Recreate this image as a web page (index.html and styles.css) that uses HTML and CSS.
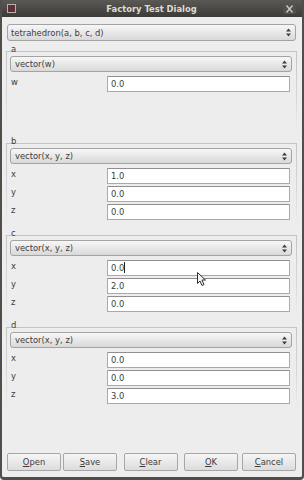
FILE: index.html
```html
<!DOCTYPE html>
<html lang="en">
<head>
  <meta charset="UTF-8">
  <title>Factory Test Dialog</title>
  <link rel="stylesheet" href="styles.css">
</head>
<body>
  <div class="window">
    <div class="titlebar">
      <span class="app-icon"></span>
      <span class="title">Factory Test Dialog</span>
      <span class="close">
        <svg width="13" height="10" viewBox="0 0 13 10"><path d="M3.5 1.5 L9.5 8.5 M9.5 1.5 L3.5 8.5" stroke="#d2cec6" stroke-width="1.3" fill="none"/></svg>
      </span>
    </div>

    <div class="content">
      <div class="combo combo-top">
        <span class="combo-text">tetrahedron(a, b, c, d)</span>
        <svg class="spin" width="5" height="9" viewBox="0 0 5 9"><path d="M0 3.5 L2.5 0.5 L5 3.5 Z M0 5.5 L5 5.5 L2.5 8.5 Z" fill="#3f3f3f"/></svg>
      </div>

      <!-- one group per tetrahedron vertex -->
      <section class="group">
        <div class="group-title">a</div>
        <div class="group-box">
          <div class="combo">
            <span class="combo-text">vector(w)</span>
            <svg class="spin" width="5" height="9" viewBox="0 0 5 9"><path d="M0 3.5 L2.5 0.5 L5 3.5 Z M0 5.5 L5 5.5 L2.5 8.5 Z" fill="#3f3f3f"/></svg>
          </div>
          <div class="rows">
            <div class="row"><span class="row-label">w</span><div class="field">0.0</div></div>
          </div>
        </div>
      </section>

      <section class="group">
        <div class="group-title">b</div>
        <div class="group-box">
          <div class="combo">
            <span class="combo-text">vector(x, y, z)</span>
            <svg class="spin" width="5" height="9" viewBox="0 0 5 9"><path d="M0 3.5 L2.5 0.5 L5 3.5 Z M0 5.5 L5 5.5 L2.5 8.5 Z" fill="#3f3f3f"/></svg>
          </div>
          <div class="rows">
            <div class="row"><span class="row-label">x</span><div class="field">1.0</div></div>
            <div class="row"><span class="row-label">y</span><div class="field">0.0</div></div>
            <div class="row"><span class="row-label">z</span><div class="field">0.0</div></div>
          </div>
        </div>
      </section>

      <section class="group">
        <div class="group-title">c</div>
        <div class="group-box">
          <div class="combo">
            <span class="combo-text">vector(x, y, z)</span>
            <svg class="spin" width="5" height="9" viewBox="0 0 5 9"><path d="M0 3.5 L2.5 0.5 L5 3.5 Z M0 5.5 L5 5.5 L2.5 8.5 Z" fill="#3f3f3f"/></svg>
          </div>
          <div class="rows">
            <div class="row"><span class="row-label">x</span><div class="field">0.0<span class="caret"></span></div></div>
            <div class="row"><span class="row-label">y</span><div class="field">2.0</div></div>
            <div class="row"><span class="row-label">z</span><div class="field">0.0</div></div>
          </div>
        </div>
      </section>

      <section class="group">
        <div class="group-title">d</div>
        <div class="group-box">
          <div class="combo">
            <span class="combo-text">vector(x, y, z)</span>
            <svg class="spin" width="5" height="9" viewBox="0 0 5 9"><path d="M0 3.5 L2.5 0.5 L5 3.5 Z M0 5.5 L5 5.5 L2.5 8.5 Z" fill="#3f3f3f"/></svg>
          </div>
          <div class="rows">
            <div class="row"><span class="row-label">x</span><div class="field">0.0</div></div>
            <div class="row"><span class="row-label">y</span><div class="field">0.0</div></div>
            <div class="row"><span class="row-label">z</span><div class="field">3.0</div></div>
          </div>
        </div>
      </section>

      <div class="buttons">
        <div class="btn-group">
          <button class="btn"><u>O</u>pen</button>
          <button class="btn"><u>S</u>ave</button>
        </div>
        <button class="btn"><u>C</u>lear</button>
        <div class="btn-group btn-group-wide">
          <button class="btn"><u>O</u>K</button>
          <button class="btn"><u>C</u>ancel</button>
        </div>
      </div>
    </div>

    <!-- mouse pointer from the screenshot -->
    <svg class="pointer" width="10" height="15" viewBox="0 0 10 15"><path d="M0.5 0.5 L0.5 11.5 L3 9 L5 13.5 L7 12.5 L5 8 L8.5 8 Z" fill="#f2f2f2" stroke="#2e2e2e" stroke-width="1" stroke-linejoin="round"/></svg>
  </div>
</body>
</html>
```

FILE: styles.css
```css
:root {
  --bg: #ededed;
  --text: #3c3c3c;
  --frame: #c4c4c4;
}
body {
  margin: 0;
  font-family: 'DejaVu Sans', sans-serif;
  font-size: 8.4px;
  color: var(--text);
  background: #fff;
}
.window {
  position: relative;
  width: 304px;
  height: 480px;
  box-sizing: border-box;
  display: flex;
  flex-direction: column;
  background: var(--bg);
  border: solid #4f4e4a;
  border-width: 0 2px 3px;
  border-radius: 0 0 4px 4px;
}
.titlebar {
  height: 17px;
  display: flex;
  align-items: center;
  padding: 0 6px 0 5px;
  background: linear-gradient(#5a5955, #3c3b37);
  color: #dfdbd2;
  font-weight: bold;
}
.app-icon {
  width: 7px;
  height: 7px;
  border: 1px solid #b8b2a8;
  background: #5e2f38;
}
.title {
  flex: 1;
  text-align: center;
  padding-left: 4px;
}
.close {
  display: flex;
  width: 13px;
  height: 10px;
  border-radius: 2px;
  background: #52514d;
}
.content {
  flex: 1;
  display: flex;
  flex-direction: column;
  padding: 7px 6px 6px 5px;
}
.combo {
  height: 16px;
  box-sizing: border-box;
  display: flex;
  align-items: center;
  border: 1px solid #a3a3a3;
  border-radius: 3px;
  background: linear-gradient(#f7f7f7, #d9d9d9);
  padding: 0 4px 0 4px;
  line-height: 14px;
}
.combo-top {
  height: 17px;
  padding-left: 3px;
}
.combo-text {
  flex: 1;
}
.group {
  margin: 3px -1px 0;
}
.group + .group {
  margin-top: 5px;
}
.group-title {
  height: 10px;
  line-height: 10px;
  padding-left: 5px;
}
.group-box {
  margin-top: -3px;
  height: 80px;
  box-sizing: border-box;
  border-style: solid;
  border-width: 1px 1px 0;
  border-image: linear-gradient(var(--frame), rgba(196,196,196,0.5) 60%, rgba(196,196,196,0)) 1;
  padding: 4px 4px 0 3px;
}
.rows {
  margin-top: 4px;
  display: flex;
  flex-direction: column;
  gap: 2px;
}
.row {
  display: flex;
  height: 16px;
}
.row-label {
  width: 96px;
  padding-left: 1px;
  line-height: 12px;
}
.field {
  flex: 1;
  margin-right: 2px;
  box-sizing: border-box;
  border: 1px solid #aaa;
  border-top-color: #8f8f8f;
  border-radius: 1px;
  background: #fff;
  padding: 0 3px;
  line-height: 14px;
}
.caret {
  display: inline-block;
  width: 1px;
  height: 11px;
  background: #222;
  vertical-align: -2px;
}
.buttons {
  margin-top: auto;
  display: flex;
  justify-content: space-between;
}
.btn-group {
  display: flex;
  gap: 2px;
}
.btn-group-wide {
  gap: 4px;
}
.btn {
  width: 54px;
  height: 18px;
  box-sizing: border-box;
  padding: 0;
  border: 1px solid #a6a6a6;
  border-radius: 2px;
  background: linear-gradient(#f6f6f6, #dcdcdc);
  font-family: 'DejaVu Sans', sans-serif;
  font-size: 8.4px;
  color: var(--text);
  line-height: 16px;
}
.pointer {
  position: absolute;
  left: 195px;
  top: 272px;
}
```
